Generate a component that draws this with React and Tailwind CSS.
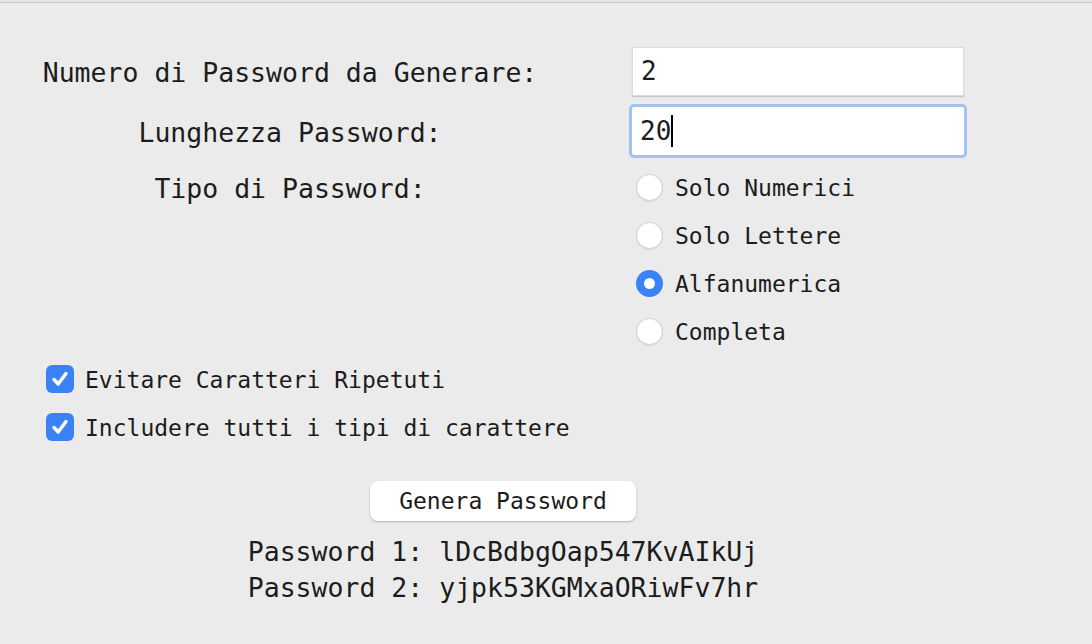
import React from "react";

const font = { fontFamily: '"DejaVu Sans Mono", "Liberation Mono", monospace' };

function Radio({ checked, label }) {
  return (
    <div className="flex items-center h-[48px] pl-[4px] gap-[12px]">
      {checked ? (
        <div className="w-[27px] h-[27px] rounded-full bg-[#3b82f6] flex items-center justify-center">
          <div className="w-[11px] h-[11px] rounded-full bg-white" />
        </div>
      ) : (
        <div className="w-[27px] h-[27px] rounded-full bg-white border border-[#d0d0d0] shadow-[0_1px_1px_rgba(0,0,0,0.08)]" />
      )}
      <span className="text-[23px] text-[#1c1c1c] pt-[2px]">{label}</span>
    </div>
  );
}

function Check({ label }) {
  return (
    <div className="flex items-center h-[48px] pl-[46px] gap-[11px]">
      <div className="w-[28px] h-[28px] rounded-[6px] bg-[#3b82f6] flex items-center justify-center">
        <svg width="20" height="20" viewBox="0 0 20 20">
          <path d="M4 10.5 L8.2 15 L16 4.5" fill="none" stroke="white" strokeWidth="3.4" strokeLinecap="round" strokeLinejoin="round" />
        </svg>
      </div>
      <span className="text-[23px] text-[#1c1c1c] pt-[2px]">{label}</span>
    </div>
  );
}

export default function App() {
  return (
    <div className="w-[1092px] h-[644px] bg-[#ebebeb] text-[#1c1c1c] overflow-hidden" style={font}>
      <div className="h-[2px] bg-[#e6e6e6]" />
      <div className="h-[1px] bg-[#c4c4c4]" />
      <div className="pt-[44px]">
        <div className="flex items-center">
          <div className="w-[580px] text-center text-[26.5px] pt-[3px]">Numero di Password da Generare:</div>
          <div className="ml-[52px] w-[332px] h-[49px] bg-white border border-[#dcdcdc] shadow-[0_1px_1px_rgba(0,0,0,0.15)] flex items-center pl-[8px] text-[26px]">
            2
          </div>
        </div>
        <div className="flex items-center mt-[11px]">
          <div className="w-[580px] text-center text-[26.5px] pt-[3px]">Lunghezza Password:</div>
          <div className="ml-[52px] w-[332px] h-[48px] bg-white rounded-[2px] shadow-[0_0_0_3px_#a3c2f0] flex items-center pl-[8px] text-[26px]">
            20<span className="inline-block w-[2px] h-[32px] bg-black" />
          </div>
        </div>
        <div className="flex mt-[8px]">
          <div className="w-[580px] h-[48px] flex items-center justify-center text-[26.5px] pt-[3px]">Tipo di Password:</div>
          <div className="ml-[52px] flex flex-col">
            <Radio label="Solo Numerici" />
            <Radio label="Solo Lettere" />
            <Radio checked label="Alfanumerica" />
            <Radio label="Completa" />
          </div>
        </div>
        <Check label="Evitare Caratteri Ripetuti" />
        <Check label="Includere tutti i tipi di carattere" />
        <div className="w-[1006px] flex flex-col items-center">
          <div className="mt-[30px] w-[266px] h-[40px] bg-white rounded-[8px] shadow-[0_1px_2px_rgba(0,0,0,0.25)] flex items-center justify-center text-[23px]">
            Genera Password
          </div>
          <div className="flex flex-col items-center mt-[13px] text-[26.5px] leading-[36px]">
            <div>Password 1: lDcBdbgOap547KvAIkUj</div>
            <div>Password 2: yjpk53KGMxaORiwFv7hr</div>
          </div>
        </div>
      </div>
    </div>
  );
}
